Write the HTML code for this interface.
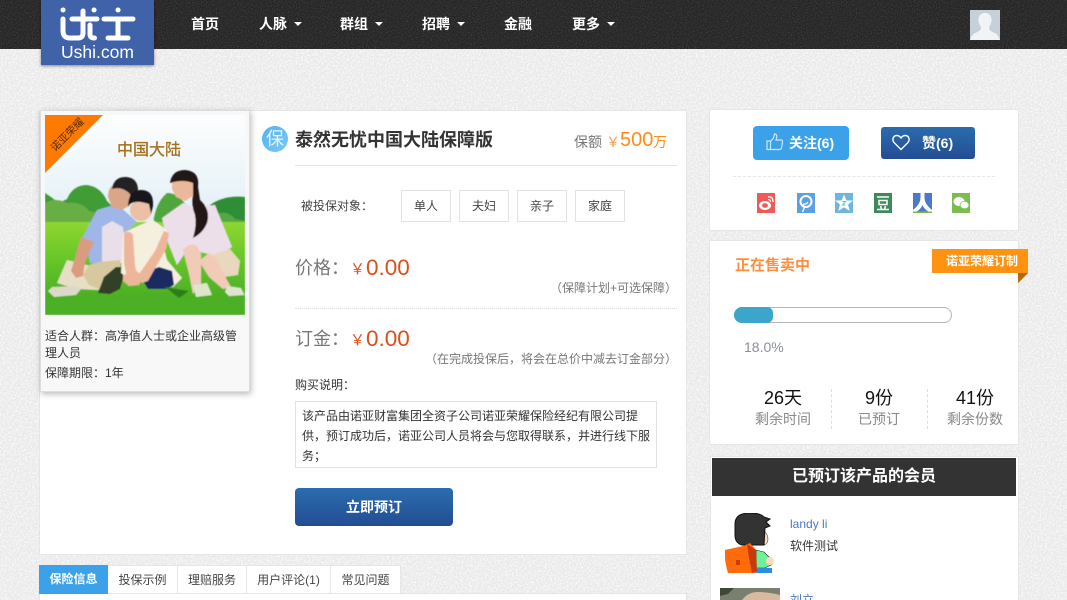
<!DOCTYPE html>
<html><head><meta charset="utf-8">
<style>
*{box-sizing:border-box;margin:0;padding:0}
html,body{width:1067px;height:600px;overflow:hidden}
body{background:#f1f1f1;font-family:"Liberation Sans","Noto Sans CJK SC",sans-serif;position:relative;color:#333}
.a{position:absolute;white-space:nowrap}
.panel{position:absolute;background:#fff;border:1px solid #e6e6e6}
.nav{color:#fff;font-size:14px;font-weight:bold;top:15px;line-height:18px}
.caret{display:inline-block;border:4px solid transparent;border-top-color:#fff;border-bottom:0;margin-left:7px;vertical-align:3px}
.opt{position:absolute;top:190px;width:50px;height:32px;border:1px solid #e3e3e3;font-size:12px;line-height:30px;text-align:center;color:#444}
.tab{position:absolute;top:565px;height:29px;background:#fff;border:1px solid #e6e6e6;border-left:0;font-size:12px;line-height:28px;text-align:center;color:#444}
.c{text-align:center;transform:translateX(-50%)}
</style></head><body>
<svg class="a" style="left:0;top:0;width:1067px;height:600px" width="1067" height="600">
<defs><filter id="w" x="0" y="0" width="100%" height="100%"><feTurbulence type="fractalNoise" baseFrequency="0.55" numOctaves="3"/><feColorMatrix values="0 0 0 0 1 0 0 0 0 1 0 0 0 0 1 0 0 0 2.200 -0.850"/></filter>
<filter id="k" x="0" y="0" width="100%" height="100%"><feTurbulence type="fractalNoise" baseFrequency="0.8" numOctaves="2"/><feColorMatrix values="0 0 0 0 1 0 0 0 0 1 0 0 0 0 1 0 0 0 1.500 -0.650"/></filter></defs>
<rect width="1067" height="600" fill="#e9e9e9"/><rect width="1067" height="600" filter="url(#w)" opacity=".9"/>
<rect width="1067" height="49" fill="#262626"/><rect width="1067" height="49" filter="url(#k)" opacity=".22"/>
</svg>

<!-- logo -->
<div class="a" style="left:41px;top:0;width:113px;height:65px;background:#3f62a8;box-shadow:0 1px 3px rgba(0,0,0,.45)"></div>
<svg class="a" style="left:41px;top:0" width="113" height="44" viewBox="41 0 113 44" fill="none" stroke="#fff" stroke-width="5" stroke-linecap="round" stroke-linejoin="round">
<path d="M63 10h.1M63 19v12q0 7 7 7h8q5 0 5-5V11M72 19h25M94 10h.1M90 25v9q0 4 4 4h.5"/>
<path d="M118 10h.1M104 19h29M118 19v19M108 38h20"/></svg>
<div class="a" style="left:41px;top:42px;width:113px;text-align:center;color:#fff;font-size:17.500px;line-height:20px">Ushi.com</div>

<div class="a nav" style="left:191px">首页</div>
<div class="a nav" style="left:259px">人脉<i class="caret"></i></div>
<div class="a nav" style="left:340px">群组<i class="caret"></i></div>
<div class="a nav" style="left:422px">招聘<i class="caret"></i></div>
<div class="a nav" style="left:504px">金融</div>
<div class="a nav" style="left:572px">更多<i class="caret"></i></div>
<svg class="a" style="left:970px;top:10px" width="30" height="30" viewBox="0 0 30 30"><rect width="30" height="30" fill="#c5d0d8"/><path d="M15 3c-5 0-7 4-6.500 8 .3 3 2 5 2.500 7 0 2-3 4-6 5-2 1-3.500 3-5 7h30c-1.500-4-3-6-5-7-3-1-6-3-6-5 .5-2 2.200-4 2.500-7C22 7 20 3 15 3z" fill="#f1f3f5"/></svg>

<!-- main panel -->
<div class="panel" style="left:39px;top:110px;width:648px;height:445px"></div>

<!-- product card -->
<div class="a" style="left:40px;top:110px;width:210px;height:282px;background:#f8f8f8;border:1px solid #ddd;box-shadow:1px 2px 6px rgba(0,0,0,.28)"></div>
<svg class="a" style="left:45px;top:115px" width="200" height="200" viewBox="0 0 200 200">
<defs><linearGradient id="sky" x1="0" y1="0" x2="0" y2="1"><stop offset="0" stop-color="#fdfefe"/><stop offset="1" stop-color="#dfeef6"/></linearGradient>
<linearGradient id="gr" x1="0" y1="0" x2="0" y2="1"><stop offset="0" stop-color="#8fd630"/><stop offset=".35" stop-color="#6cc82a"/><stop offset=".75" stop-color="#4fb324"/><stop offset="1" stop-color="#3f9f20"/></linearGradient>
<filter id="b" x="-5%" y="-5%" width="110%" height="110%"><feGaussianBlur stdDeviation=".6"/></filter>
<clipPath id="pc"><rect width="200" height="200"/></clipPath></defs>
<g clip-path="url(#pc)"><rect width="200" height="112" fill="url(#sky)"/>
<g filter="url(#b)">
<!-- trees -->
<path d="M0 78l6 4 8 6 8-4q6-14 20-14 14 2 20 16l8 8 0 14H0z" fill="#3f9c36"/>
<path d="M0 88q10-6 22 0 14-2 22 8l16 3v9H0z" fill="#68ae45"/>
<path d="M108 110q2-22 14-32 14 0 22 18v14z" fill="#50a63e"/>
<path d="M165 90q14-10 35-8v30h-40z" fill="#2f8e35"/>
<path d="M170 100q12-6 20 4l10 2v6h-30z" fill="#57a845"/>
<rect y="107" width="200" height="93" fill="url(#gr)"/>
<!-- man -->
<path d="M12 168l10-23 13 3 20 6 10 12-12 9-22-1z" fill="#e6dfc5"/>
<path d="M35 127l17-32 20-6 10 9 10 9-12 11 0 30-20 2-15-2-3-14-4-2z" fill="#9fb6e8"/>
<path d="M57 112l10-6 11 6 2 20-2 16-21 1z" fill="#e9dfe8"/>
<path d="M36 122l13 5-9 20-2 14-7 2-5-7 3-10z" fill="#d99c7e"/>
<path d="M38 160l6-10 10-3 21-2 1 12-10 12-12 5-10-4z" fill="#d8c89f"/>
<path d="M53 178l6-16 12-10 6 0 2 8-4 14-10 5z" fill="#333f28"/>
<path d="M3 176l4-4 24-1 5 3-5 6-22 2z" fill="#ddd9c8"/>
<path d="M63 82q0-12 10-14l12 2 3 8-3 12-8 5-10-3z" fill="#dba58a"/>
<path d="M67 74q2-12 13-12 12 0 13 12l-3 10-3 4-2-9q-8-8-18-5z" fill="#232222"/>
<!-- woman -->
<path d="M117 103l21-15 10 4 22-2 8 20 9 22-15 10-12-4-18-3-10 15-10-25z" fill="#ecdfe9"/>
<path d="M167 140l18-6 10 12-2 14-14 2-12-10z" fill="#e8d8bd"/>
<path d="M138 135q6-8 14-4l4 8 0 30-8 10-4-20z" fill="#f1cbb8"/>
<path d="M154 146l10-8 8 6 6 14 8 14-8 2-14-12z" fill="#f1cbb8"/>
<path d="M148 170l14-2 5 12-16 2zM182 171l14 2 4 8-14 2-6-6z" fill="#dfe5cd"/>
<path d="M127 68q2-10 12-10 9 0 10 10l-1 13-8 5-9-4-4-8z" fill="#ecb89c"/>
<path d="M125 68Q127 55 140 55Q155 56 153 72L155 85Q166 95 162 108Q158 118 148 123Q152 110 150 100Q146 90 148 80L148 68Q138 64 125 68z" fill="#241412"/>
<!-- girl -->
<path d="M78 118L95 110L108 105L122 115L118 130L122 145L137 163L128 172L105 158L85 165L76 158z" fill="#f5efdd"/>
<path d="M98 158l16-6 13 4 2 14-8 4-18 0-5-8z" fill="#1a2c62"/>
<path d="M79 118q6-3 9 2l2 30 2 10-10 2-3-14z" fill="#edb69b"/>
<path d="M92 162l18-26 9-20 5 2-3 16-18 32-6 2z" fill="#edb69b"/>
<path d="M78 160l14-4 6 6-4 8-10 1-6-5z" fill="#edb69b"/>
<circle cx="96" cy="95" r="11" fill="#ecc0a5"/>
<path d="M83 92q0-17 13-17 13 0 12 16l-2 8-2-10q-10-3-13-2-6 0-8 5z" fill="#15151f"/>
<!-- foreground grass -->
<path d="M0 184l40-3 30 2 40-5 30 6 60-4v20H0z" fill="#4bb025"/>
<path d="M120 172l24 4-10 7z" fill="#2d7d1e"/>
</g></g>
</svg>
<svg class="a" style="left:45px;top:115px" width="59" height="59"><path d="M0 0h58L0 58z" fill="#ff7a00"/><text x="0" y="0" transform="translate(10 37) rotate(-45)" font-size="10.500" fill="#5a3000" font-family="Liberation Sans,Noto Sans CJK SC,sans-serif">诺亚荣耀</text></svg>
<div class="a" style="left:117px;top:141px;font-size:16px;line-height:20px;color:#a5701a;-webkit-text-stroke:.3px #a5701a">中国大陆</div>
<div class="a" style="left:45px;top:328px;width:200px;white-space:normal;font-size:12px;line-height:17px;color:#333">适合人群：高净值人士或企业高级管理人员</div>
<div class="a" style="left:45px;top:365px;font-size:12px;line-height:17px;color:#333">保障期限：1年</div>

<!-- title -->
<div class="a" style="left:262px;top:126px;width:26px;height:26px;border-radius:50%;background:linear-gradient(135deg,#4fb2f1,#7cc8f5);color:#e9f6ff;font-size:18px;line-height:26px;text-align:center">保</div>
<div class="a" style="left:295px;top:128px;font-size:18px;line-height:24px;font-weight:bold;color:#333">泰然无忧中国大陆保障版</div>
<div class="a" style="left:574px;top:133px;font-size:14px;line-height:18px;color:#777">保额</div>
<div class="a" style="left:606px;top:133px;font-size:14px;line-height:18px;color:#fa9a4a">￥</div>
<div class="a" style="left:620px;top:128px;font-size:20px;line-height:24px;color:#ff8c1a">500</div>
<div class="a" style="left:653px;top:133px;font-size:14px;line-height:18px;color:#ff8c1a">万</div>
<div class="a" style="left:295px;top:165px;width:382px;height:1px;background:#e4e4e4"></div>

<div class="a" style="left:301px;top:197px;font-size:12px;line-height:18px;color:#444">被投保对象：</div>
<div class="opt" style="left:401px">单人</div><div class="opt" style="left:459px">夫妇</div><div class="opt" style="left:517px">亲子</div><div class="opt" style="left:575px">家庭</div>

<div class="a" style="left:295px;top:256px;font-size:18px;line-height:24px;color:#777">价格：</div>
<div class="a" style="left:350px;top:260px;font-size:15px;line-height:20px;color:#e0521c">￥</div>
<div class="a" style="left:366px;top:254px;font-size:22.500px;line-height:28px;color:#d9501e">0.00</div>
<div class="a" style="right:390px;top:280px;font-size:12px;line-height:16px;color:#777">（保障计划+可选保障）</div>
<div class="a" style="left:295px;top:308px;width:382px;border-top:1px dotted #ddd"></div>
<div class="a" style="left:295px;top:327px;font-size:18px;line-height:24px;color:#777">订金：</div>
<div class="a" style="left:350px;top:331px;font-size:15px;line-height:20px;color:#e0521c">￥</div>
<div class="a" style="left:366px;top:325px;font-size:22.500px;line-height:28px;color:#d9501e">0.00</div>
<div class="a" style="right:390px;top:351px;font-size:12px;line-height:16px;color:#777">（在完成投保后，将会在总价中减去订金部分）</div>

<div class="a" style="left:295px;top:377px;font-size:12px;line-height:17px;color:#333">购买说明：</div>
<div class="a" style="left:295px;top:401px;width:362px;height:67px;border:1px solid #e3e3e3;padding:4px 6px 0;white-space:normal;font-size:12px;line-height:20px;color:#333;overflow:hidden">该产品由诺亚财富集团全资子公司诺亚荣耀保险经纪有限公司提供，预订成功后，诺亚公司人员将会与您取得联系，并进行线下服务；</div>
<div class="a" style="left:295px;top:488px;width:158px;height:38px;border-radius:4px;background:linear-gradient(#2a6dae,#234d93);color:#fff;font-size:14px;font-weight:bold;line-height:38px;text-align:center">立即预订</div>

<!-- tabs -->
<div class="panel" style="left:39px;top:593px;width:648px;height:20px"></div>
<div class="tab" style="left:39px;width:69px;background:#3ba2ea;border:0;color:#fff;font-weight:bold;height:29px;line-height:28px">保险信息</div>
<div class="tab" style="left:108px;width:70px">投保示例</div>
<div class="tab" style="left:178px;width:69px">理赔服务</div>
<div class="tab" style="left:247px;width:84px">用户评论(1)</div>
<div class="tab" style="left:331px;width:70px">常见问题</div>

<!-- right 1 -->
<div class="panel" style="left:709px;top:109px;width:310px;height:122px"></div>
<div class="a" style="left:753px;top:126px;width:96px;height:34px;border-radius:4px;background:#3ba2ea"></div>
<svg class="a" style="left:766px;top:133px" width="18" height="18" viewBox="0 0 18 18" fill="none" stroke="#cfe6f8" stroke-width="1.200"><path d="M1 8h3.500v8.500H1zM4.500 8.500l3-3.500 1-4q2.500 0 2.300 3L10 7h5q1.800 0 1.500 2l-1 6q-.3 1.500-2 1.500H4.500"/></svg>
<div class="a" style="left:789px;top:134px;font-size:14px;line-height:18px;font-weight:bold;color:#fff">关注(6)</div>
<div class="a" style="left:881px;top:127px;width:94px;height:32px;border-radius:3px;background:linear-gradient(#2a6dae,#234d93)"></div>
<svg class="a" style="left:892px;top:134px" width="18" height="17" viewBox="0 0 18 17" fill="none" stroke="#fff" stroke-width="1.400"><path d="M9 15.500L2.200 8.700Q.5 6.800 1 4.600 1.800 1.500 4.800 1.500 7.400 1.500 9 4 10.600 1.500 13.200 1.500 16.200 1.500 17 4.600 17.500 6.800 15.800 8.700z"/></svg>
<div class="a" style="left:922px;top:134px;font-size:14px;line-height:18px;font-weight:bold;color:#fff">赞(6)</div>
<div class="a" style="left:733px;top:176px;width:262px;border-top:1px dashed #e6e6e6"></div>
<svg class="a" style="left:757px;top:193px" width="220" height="20" viewBox="0 0 220 20">
<rect width="18" height="20" fill="#ed5a5a"/><ellipse cx="8" cy="12.500" rx="6" ry="4.500" fill="#fff"/><ellipse cx="8" cy="12.500" rx="3" ry="2.300" fill="#ed5a5a"/><path d="M11 4q5-1 5 5M11 6.500q2.500 0 2.500 2.500" stroke="#fff" stroke-width="1.300" fill="none"/>
<rect x="40" width="18" height="20" fill="#5aa0e2"/><circle cx="49" cy="8.500" r="5.500" fill="none" stroke="#fff" stroke-width="2"/><path d="M46 11q3 1 5-2" stroke="#fff" stroke-width="1.200" fill="none"/><path d="M48 13l-2.500 6" stroke="#fff" stroke-width="1.400"/>
<rect x="78" width="18" height="20" fill="#6eb5df"/><path d="M87 1.500l2.500 6h6.500l-5 4 1.800 6.500-5.800-3.800-5.800 3.800 1.800-6.500-5-4h6.500z" fill="#fff"/><path d="M85.500 8.500h3l-3 3.500h3" stroke="#6eb5df" fill="none"/>
<rect x="117" width="18" height="20" fill="#3f8a5a"/><path d="M120 4h12M122 7.500h8v4h-8zM123.500 13l1 3M128.500 13l-1 3M120 16.500h12" stroke="#fff" stroke-width="1.500" fill="none"/>
<path d="M156 0h19v20h-19z" fill="#4b78c8"/><path d="M163.500 0h4v5q0 6 7.500 12v2h-3q-5-3-6.500-7-1.500 4-6.500 7h-3v-2q7.500-6 7.500-12z" fill="#fff"/><rect x="156" y="18.500" width="19" height="1.500" fill="#7cb84a"/>
<rect x="195" width="18" height="20" fill="#7cbd52"/><ellipse cx="202" cy="8.500" rx="5.500" ry="4.500" fill="#fff"/><ellipse cx="207.500" cy="12" rx="4.500" ry="3.700" fill="#fff" stroke="#7cbd52" stroke-width=".7"/>
</svg>

<!-- right 2 -->
<div class="panel" style="left:709px;top:240px;width:310px;height:205px"></div>
<div class="a" style="left:735px;top:256px;font-size:15px;line-height:20px;font-weight:bold;color:#ff8f3f">正在售卖中</div>
<div class="a" style="left:932px;top:249px;width:96px;height:24px;background:#ff9210;color:#fff;font-size:12px;font-weight:bold;line-height:24px;padding-left:14px">诺亚荣耀订制</div>
<div class="a" style="left:1018px;top:273px;border-top:10px solid #b86a08;border-left:10px solid #b86a08;border-right:0;border-bottom:0;width:0;height:0;clip-path:polygon(0 0,100% 0,0 100%)"></div>
<div class="a" style="left:734px;top:307px;width:218px;height:16px;border:1px solid #b5b5b5;border-radius:8px;background:#fff"></div>
<div class="a" style="left:734px;top:307px;width:39px;height:16px;border-radius:8px 6px 6px 8px;background:#3ba5cb"></div>
<div class="a" style="left:744px;top:338px;font-size:14px;line-height:18px;color:#8a8f9a">18.0%</div>
<div class="a c" style="left:783px;top:387px;font-size:18px;line-height:22px;color:#111">26天</div>
<div class="a c" style="left:783px;top:410px;font-size:14px;line-height:18px;color:#888">剩余时间</div>
<div class="a c" style="left:879px;top:387px;font-size:18px;line-height:22px;color:#111">9份</div>
<div class="a c" style="left:879px;top:410px;font-size:14px;line-height:18px;color:#888">已预订</div>
<div class="a c" style="left:975px;top:387px;font-size:18px;line-height:22px;color:#111">41份</div>
<div class="a c" style="left:975px;top:410px;font-size:14px;line-height:18px;color:#888">剩余份数</div>
<div class="a" style="left:831px;top:389px;height:40px;border-left:1px dashed #ddd"></div>
<div class="a" style="left:927px;top:389px;height:40px;border-left:1px dashed #ddd"></div>

<!-- right 3 -->
<div class="panel" style="left:710px;top:456px;width:309px;height:160px"></div>
<div class="a" style="left:712px;top:458px;width:304px;height:38px;background:#333;color:#fff;font-size:16px;font-weight:bold;line-height:38px;text-align:center">已预订该产品的会员</div>
<svg class="a" style="left:720px;top:513px" width="60" height="60" viewBox="0 0 60 60">
<rect width="60" height="60" fill="#fff"/>
<path d="M43 17q5 4 5 9 0 5-4 6h-3V17z" fill="#f3dcc0" stroke="#222" stroke-width=".5"/>
<path d="M15 11Q15 0 30 0Q40 0 44 4L50 6L46 9L50 13L45 15L44 32H22Q15 30 15 22z" fill="#333" stroke="#111"/>
<path d="M36 37l8 2 8 8q2 3-1 5l-6 3H36z" fill="#6ff09a" stroke="#222" stroke-width=".6"/>
<circle cx="50" cy="48" r="4" fill="#f3dcc0"/>
<path d="M36 55h16v5H36z" fill="#2a8fe0"/>
<path d="M5 37l18-4 7-3 6 7 0 23H8q-3-10-3-16z" fill="#ff6a0a"/>
<path d="M27 31l9 6 1 21-5 2-3-15z" fill="#c93a08"/>
<rect x="16" y="47" width="4" height="5" fill="#c93a08"/>
</svg>
<div class="a" style="left:790px;top:516px;font-size:12px;line-height:16px;color:#4a78c4">landy li</div>
<div class="a" style="left:790px;top:538px;font-size:12px;line-height:16px;color:#333">软件测试</div>
<svg class="a" style="left:720px;top:588px" width="60" height="12" viewBox="0 0 60 12"><rect width="60" height="12" fill="#7a8070"/><path d="M0 0h14l-6 6-8 2z" fill="#3c4a34"/><path d="M22 12q6-8 16-8t22 3v5z" fill="#d9ba9e"/></svg>
<div class="a" style="left:790px;top:592px;font-size:12px;line-height:16px;color:#4a78c4">刘立</div>
</body></html>
